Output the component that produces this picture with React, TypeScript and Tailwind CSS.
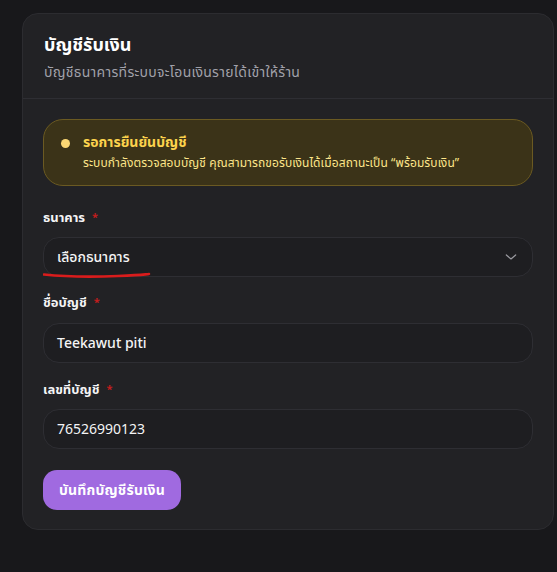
import React from "react";

const font = { fontFamily: '"Noto Sans Thai", "Noto Sans", "Liberation Sans", sans-serif' };

function Label({ children }: { children: React.ReactNode }) {
  return (
    <div className="flex items-start text-[13px] font-bold leading-5 text-[#f4f4f5]">
      <span>{children}</span>
      <span className="ml-[7px] mt-[3px] text-[11px] leading-[14px] text-[#c11d1d]">*</span>
    </div>
  );
}

export default function App() {
  return (
    <div className="min-h-[572px] w-full bg-[#18181b] pt-[13px] pl-[22px] pr-[3px]" style={font}>
      <div className="w-[532px] overflow-hidden rounded-2xl border border-[#2c2c30] bg-[#222225]">
        <div className="border-b border-[#2e2e33] px-[21px] pt-[18px] pb-[15px]">
          <div className="text-[18px] font-bold leading-7 text-white">บัญชีรับเงิน</div>
          <div className="mt-[3px] text-[14px] leading-5 tracking-[0.3px] text-[#a1a1aa]">บัญชีธนาคารที่ระบบจะโอนเงินรายได้เข้าให้ร้าน</div>
        </div>
        <div className="px-[20px] pt-[20px] pb-[19px]">
          <div className="flex items-start gap-[13px] rounded-[20px] border border-[#6b5a22] bg-[#3b3318] pl-[17px] pr-4 pt-[13px] pb-[14px]">
            <div className="mt-[6px] h-[9px] w-[9px] shrink-0 rounded-full bg-[#fcd874]" />
            <div>
              <div className="text-[14px] font-bold leading-5 text-[#fcd34d]">รอการยืนยันบัญชี</div>
              <div className="mt-[2px] text-[12px] leading-4 tracking-[0.1px] text-[#fde68a]">
                ระบบกำลังตรวจสอบบัญชี คุณสามารถขอรับเงินได้เมื่อสถานะเป็น “พร้อมรับเงิน”
              </div>
            </div>
          </div>

          <div className="mt-[22px]">
            <Label>ธนาคาร</Label>
            <div className="relative mt-[9px] flex h-10 items-center justify-between rounded-2xl border border-[#2e2e33] bg-[#1e1e21] pl-[13px] pr-[13px]">
              <span className="text-[14px] font-medium text-[#f4f4f5]">เลือกธนาคาร</span>
              <svg width="16" height="16" viewBox="0 0 24 24" fill="none" stroke="#9a9aa0" strokeWidth="1.8" strokeLinecap="round" strokeLinejoin="round">
                <path d="m5 9 7 6 7-6" />
              </svg>
              <svg className="absolute left-[-1px] top-[33px]" width="108" height="8" viewBox="0 0 108 8" fill="none">
                <path d="M1 3.5 C 20 5.5, 50 6, 75 5 S 100 3.5, 106 3" stroke="#d91c1c" strokeWidth="2.6" strokeLinecap="round" />
              </svg>
            </div>
          </div>

          <div className="mt-[16px]">
            <Label>ชื่อบัญชี</Label>
            <div className="mt-[10px] flex h-10 items-center rounded-2xl border border-[#2e2e33] bg-[#1e1e21] pl-[13px]">
              <span className="text-[14px] font-medium text-[#f4f4f5]">Teekawut piti</span>
            </div>
          </div>

          <div className="mt-[17px]">
            <Label>เลขที่บัญชี</Label>
            <div className="mt-[9px] flex h-10 items-center rounded-2xl border border-[#2e2e33] bg-[#1e1e21] pl-[13px]">
              <span className="text-[14px] text-[#f4f4f5]">76526990123</span>
            </div>
          </div>

          <div className="mt-[21px] flex">
            <div className="flex h-10 items-center rounded-[14px] bg-[#a06ae0] px-4 text-[14px] font-bold tracking-[0.2px] text-white">
              บันทึกบัญชีรับเงิน
            </div>
          </div>
        </div>
      </div>
    </div>
  );
}
